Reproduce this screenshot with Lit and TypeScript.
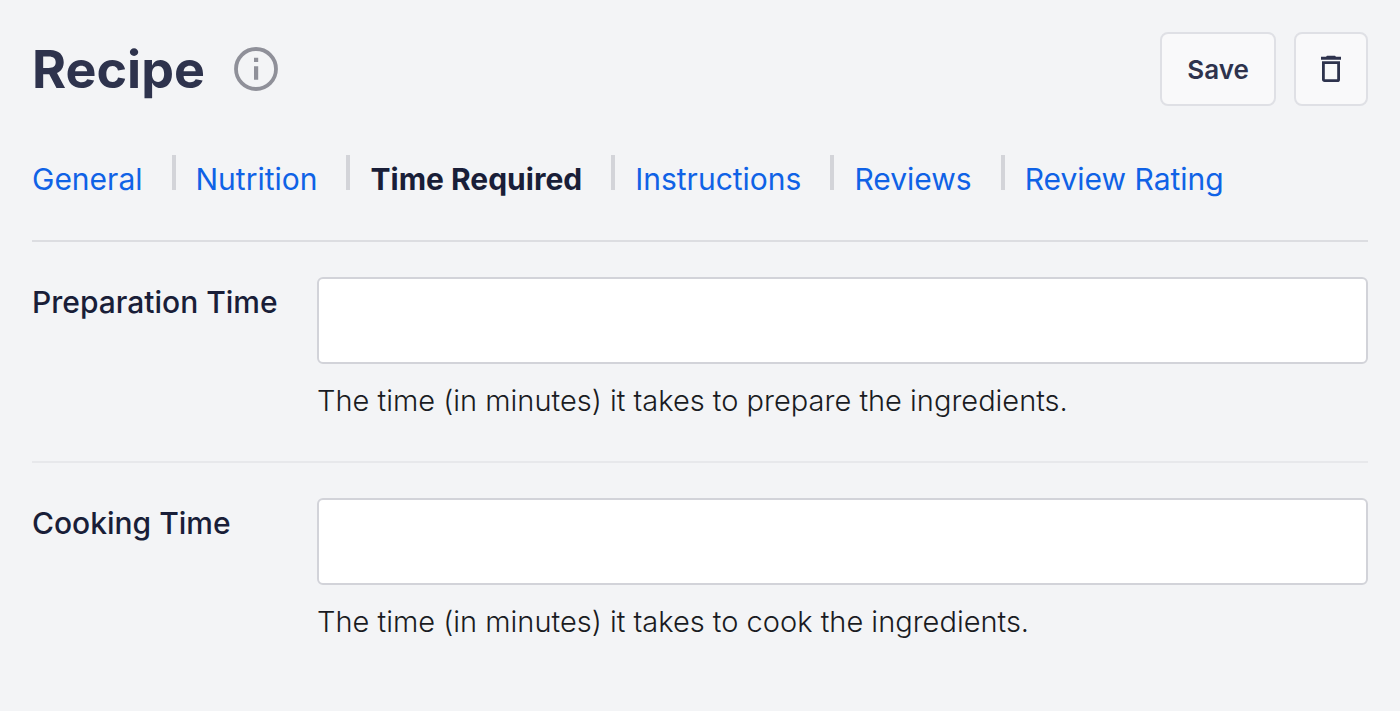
import { LitElement, html, css } from "lit";
import { customElement, property, state } from "lit/decorators.js";

@customElement("recipe-field")
export class RecipeField extends LitElement {
  @property() label = "";
  @property() hint = "";

  static styles = css`
    :host {
      display: block;
    }
    .row {
      display: grid;
      grid-template-columns: 285px minmax(0, 1fr);
      padding: 35px 0 40px;
    }
    .label {
      padding-top: 7px;
      font-size: 30px;
      line-height: 36px;
      font-weight: 500;
      color: #191e38;
      white-space: nowrap;
    }
    .input {
      display: block;
      box-sizing: border-box;
      width: 100%;
      height: 87px;
      padding: 0 24px;
      border: 2px solid #d2d3d9;
      border-radius: 6px;
      background: #fff;
      color: #191e38;
      font: inherit;
      font-size: 30px;
    }
    .hint {
      margin: 17px 0 0;
      font-size: 29px;
      line-height: 40px;
      font-weight: 300;
      color: #191b22;
    }
  `;

  render() {
    return html`
      <div class="row">
        <label class="label" for="value">${this.label}</label>
        <div>
          <input class="input" id="value" type="text" aria-describedby="hint" />
          <p class="hint" id="hint">${this.hint}</p>
        </div>
      </div>
    `;
  }
}

@customElement("app-root")
export class AppRoot extends LitElement {
  @state() private active = "Time Required";

  private tabs = [
    "General",
    "Nutrition",
    "Time Required",
    "Instructions",
    "Reviews",
    "Review Rating",
  ];

  static styles = css`
    :host {
      display: block;
      box-sizing: border-box;
      min-height: 100vh;
      padding: 32px;
      background: #f3f4f6;
      font-family: Inter, "Open Sans", sans-serif;
    }
    .header {
      display: flex;
      align-items: center;
      gap: 18px;
    }
    .title {
      margin: 0;
      padding-top: 2px;
      font-size: 52px;
      line-height: 64px;
      font-weight: 700;
      color: #2e334d;
    }
    .info {
      display: flex;
      margin: 0 auto 0 11px;
      padding: 0;
      border: 0;
      background: none;
      color: #8f9099;
    }
    .button {
      display: flex;
      align-items: center;
      justify-content: center;
      box-sizing: border-box;
      height: 74px;
      border: 2px solid #dfe0e5;
      border-radius: 8px;
      background: #f9f9fa;
      color: #2e334d;
      font: inherit;
      font-size: 26px;
      font-weight: 600;
    }
    .save {
      width: 116px;
    }
    .delete {
      width: 74px;
      padding: 0;
    }
    .tabs {
      display: flex;
      padding: 49px 0 43px;
      border-bottom: 2px solid #dcdde1;
    }
    .tab {
      display: flex;
      white-space: nowrap;
    }
    .tab + .tab::before {
      content: "";
      width: 4px;
      height: 35px;
      margin: 0 20px 0 29px;
      background: #d3d4d9;
    }
    .link {
      padding-top: 6px;
      font-size: 30px;
      line-height: 36px;
      color: #0f62e6;
      text-decoration: none;
    }
    .current {
      color: #191e38;
      font-weight: 700;
    }
    .field + .field {
      border-top: 2px solid #e7e8eb;
    }
  `;

  private select(event: Event, tab: string) {
    event.preventDefault();
    this.active = tab;
  }

  render() {
    return html`
      <header class="header">
        <h1 class="title">Recipe</h1>
        <button class="info" type="button" aria-label="About recipe">
          <svg width="44" height="44" viewBox="0 0 44 44" aria-hidden="true">
            <circle cx="22" cy="22" r="20" fill="none" stroke="currentColor" stroke-width="3.8" />
            <path d="M20 10.8h4.2v4.2h-4.2zM20 19.2h4.2v13.6h-4.2z" fill="currentColor" />
          </svg>
        </button>
        <button class="button save" type="button">Save</button>
        <button class="button delete" type="button" aria-label="Delete">
          <svg width="22" height="28" viewBox="0 0 22 28" aria-hidden="true">
            <path d="M7 .7h8l1 1h5v3H1v-3h5z" fill="currentColor" />
            <path
              d="M3.4 7.6h15.2v16.8q0 1.2-1.2 1.2H4.6q-1.2 0-1.2-1.2z"
              fill="none"
              stroke="currentColor"
              stroke-width="2.8"
            />
          </svg>
        </button>
      </header>
      <nav class="tabs" aria-label="Recipe sections">
        ${this.tabs.map(
          (tab) => html`
            <div class="tab">
              <a
                class="link ${tab === this.active ? "current" : ""}"
                href="#"
                aria-current=${tab === this.active ? "page" : "false"}
                @click=${(event: Event) => this.select(event, tab)}
                >${tab}</a
              >
            </div>
          `
        )}
      </nav>
      <recipe-field
        class="field"
        label="Preparation Time"
        hint="The time (in minutes) it takes to prepare the ingredients."
      ></recipe-field>
      <recipe-field
        class="field"
        label="Cooking Time"
        hint="The time (in minutes) it takes to cook the ingredients."
      ></recipe-field>
    `;
  }
}
